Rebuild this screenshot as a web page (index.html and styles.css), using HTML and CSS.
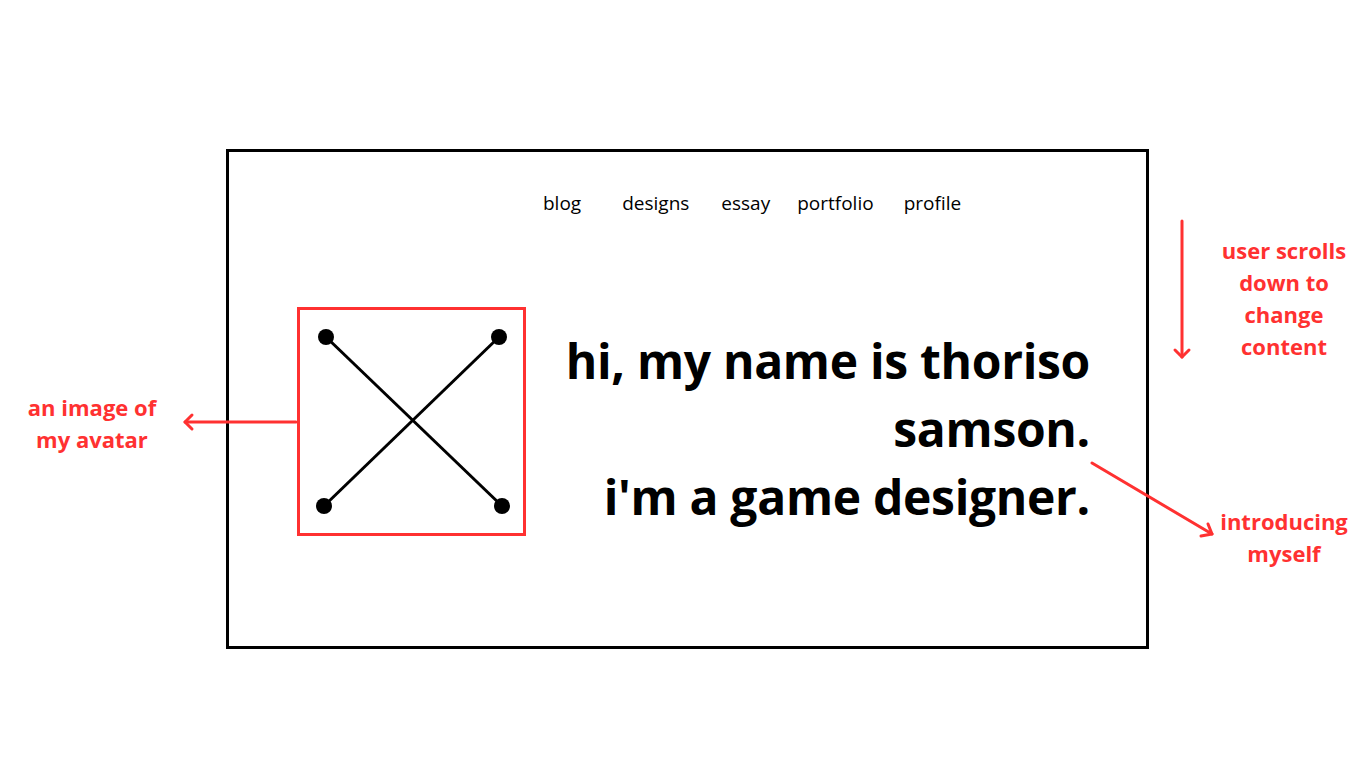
FILE: index.html
```html
<!DOCTYPE html>
<html lang="en">
<head>
    <meta charset="UTF-8">
    <meta name="viewport" content="width=device-width, initial-scale=1.0">
    <title>Wireframe - Home</title>
    <link rel="stylesheet" href="styles.css">
</head>
<body>

    <div class="canvas">

        <div class="frame">
            <nav class="nav">
                <a href="#" class="nav-link">blog</a>
                <a href="#" class="nav-link">designs</a>
                <a href="#" class="nav-link">essay</a>
                <a href="#" class="nav-link">portfolio</a>
                <a href="#" class="nav-link">profile</a>
            </nav>

            <div class="hero">
                <div class="avatar">
                    <svg width="222" height="222" viewBox="0 0 222 222">
                        <line x1="26" y1="27" x2="202" y2="196" stroke="#000" stroke-width="3"/>
                        <line x1="199" y1="27" x2="24" y2="196" stroke="#000" stroke-width="3"/>
                        <circle cx="26" cy="27" r="8"/>
                        <circle cx="199" cy="27" r="8"/>
                        <circle cx="24" cy="196" r="8"/>
                        <circle cx="202" cy="196" r="8"/>
                    </svg>
                </div>
                <h1 class="intro">
                    hi, my name is thoriso<br>
                    samson.<br>
                    i'm a game designer.
                </h1>
            </div>
        </div>

        <!-- notes around the wireframe -->
        <svg class="arrows" width="1366" height="768" viewBox="0 0 1366 768">
            <g stroke="#ff3131" stroke-width="3" fill="none" stroke-linecap="round" stroke-linejoin="round">
                <line x1="296" y1="422" x2="185" y2="422"/>
                <polyline points="192,415 185,422 192,429"/>
                <line x1="1182" y1="221" x2="1182" y2="357"/>
                <polyline points="1175,350 1182,357 1189,350"/>
                <line x1="1092" y1="463" x2="1212" y2="534"/>
                <polyline points="1201,536 1212,534 1208,524"/>
            </g>
        </svg>

        <div class="note note-avatar">an image of<br>my avatar</div>
        <div class="note note-scroll">user scrolls<br>down to<br>change<br>content</div>
        <div class="note note-intro">introducing<br>myself</div>

    </div>

</body>
</html>
```

FILE: styles.css
```css
body {
    margin: 0;
    background-color: #ffffff;
    font-family: "Open Sans", Arial, sans-serif;
    color: #000;
}

.canvas {
    position: relative;
    width: 1366px;
    height: 768px;
    overflow: hidden;
}

.frame {
    box-sizing: border-box;
    width: 923px;
    height: 500px;
    margin-left: 226px;
    margin-top: 149px;
    border: 3px solid #000;
    display: inline-block;
    vertical-align: top;
}

.nav {
    display: flex;
    padding-top: 39px;
    padding-left: 314px;
    gap: 27px;
}

.nav-link {
    color: #000;
    text-decoration: none;
    font-size: 19px;
    line-height: 24px;
}

.nav-link:first-child {
    margin-right: 14px;
}

.nav-link:nth-child(2) {
    margin-right: 5px;
}

.nav-link:nth-child(4) {
    margin-right: 3px;
}

.hero {
    display: flex;
    align-items: flex-start;
    padding-top: 92px;
    padding-left: 68px;
    padding-right: 56px;
}

.avatar {
    box-sizing: border-box;
    width: 229px;
    height: 229px;
    border: 3px solid #ff3131;
    flex-shrink: 0;
}

.avatar svg {
    display: block;
}

.intro {
    flex: 1;
    margin: 20px 0 0 0;
    text-align: right;
    font-size: 48px;
    font-weight: 700;
    line-height: 68px;
    letter-spacing: -0.3px;
}

.arrows {
    position: absolute;
    left: 0;
    top: 0;
    pointer-events: none;
}

.note {
    position: absolute;
    color: #ff3131;
    font-weight: 700;
    font-size: 22px;
    line-height: 32px;
    text-align: center;
    width: 160px;
}

.note-avatar {
    left: 12px;
    top: 391px;
}

.note-scroll {
    left: 1204px;
    top: 234px;
}

.note-intro {
    left: 1204px;
    top: 505px;
}
```
